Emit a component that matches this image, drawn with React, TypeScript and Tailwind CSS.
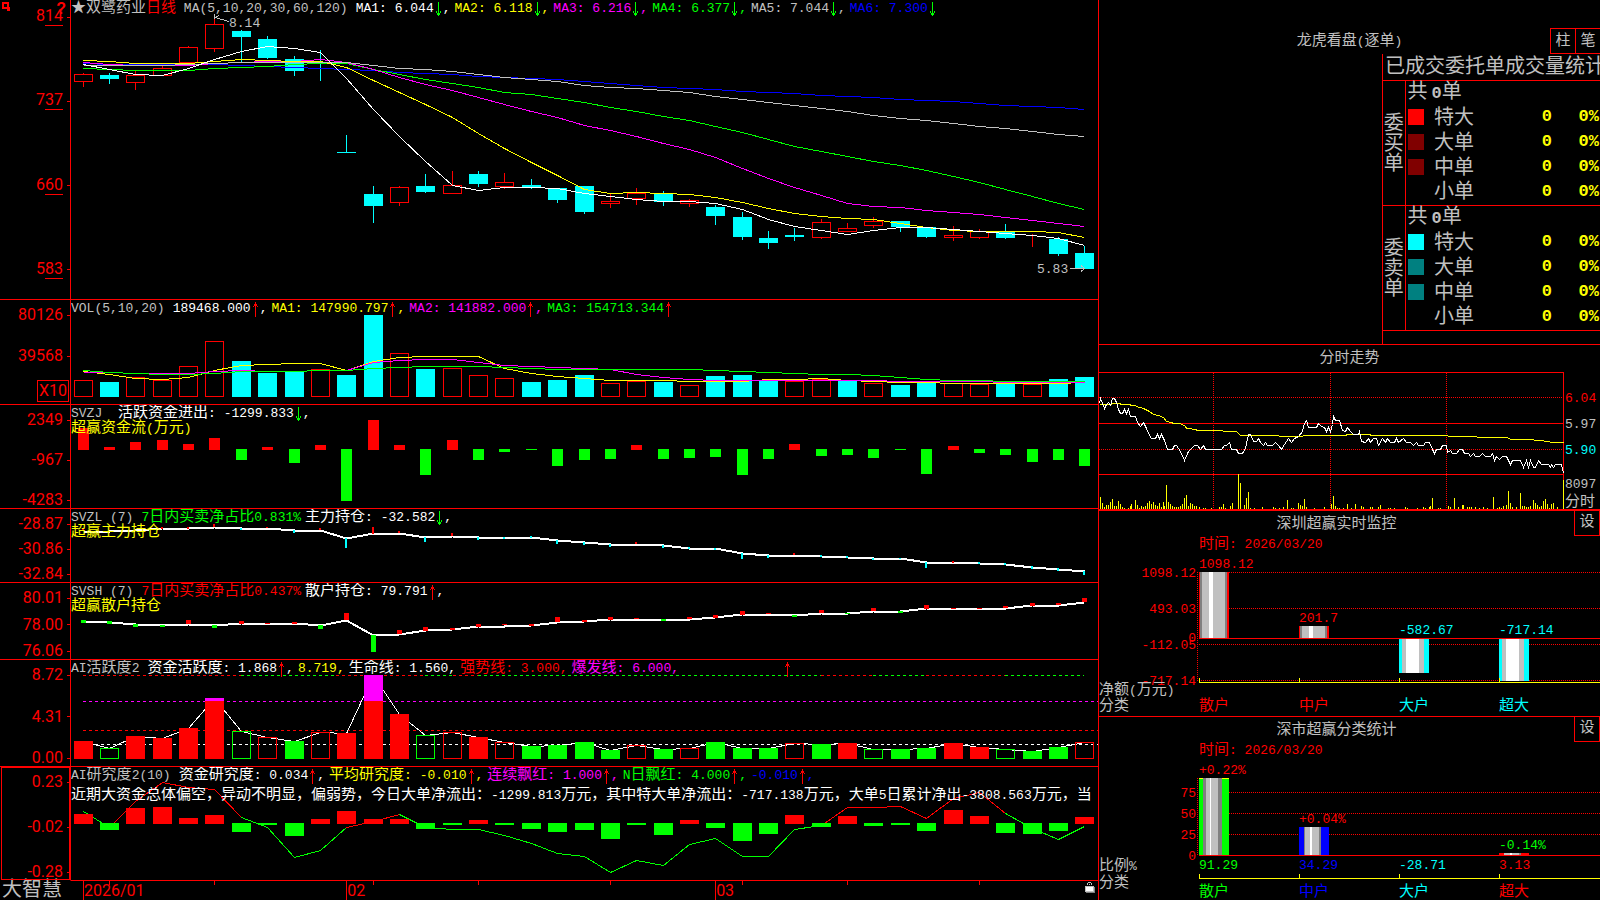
import { Fragment, type ReactNode } from "react";

/* ---------- palette ---------- */
const RED = "#ff0000";
const GREEN = "#00ff00";
const CYAN = "#00ffff";
const YELLOW = "#ffff00";
const MAGENTA = "#ff00ff";
const BLUE = "#0000ff";
const SILVER = "#c0c0c0";
const GREY = "#808080";
const WHITE = "#ffffff";

/* ---------- geometry shared by all daily charts ---------- */
const LEFT = 71;
const WIDTH = 1027;
const cx = (i: number) => Math.floor(83.18 + 26.36 * i);
const third = (base: number, v: number) => Math.round(base + v / 3);
const line = (base: number, values: number[], from = 0) =>
  values.map((v, i) => `${cx(i + from) + 0.5},${third(base, v) + 0.5}`).join(" ");

/* ---------- text ---------- */
const WIDE = /([\u2605\u3000-\u9fff\uff00-\uffef]+)/;

function Mixed({ text, className = "" }: { text: string; className?: string }) {
  return (
    <span className={`whitespace-pre ${className}`}>
      {text.split(WIDE).map((run, i) =>
        i % 2 ? (
          <span key={i} className="text-[15px] leading-4">
            {run}
          </span>
        ) : (
          <Fragment key={i}>{run}</Fragment>
        ),
      )}
    </span>
  );
}

function Arrow({ up = false }: { up?: boolean }) {
  return (
    <svg width="9" height="15" viewBox="0 0 9 15" className="shrink-0 self-center" shapeRendering="crispEdges" aria-hidden="true">
      {up ? (
        <path d="M4 0h1v15h-1zM3 2h3v2h-3zM2 4h1v1h-1zM6 4h1v1h-1z" fill={RED} />
      ) : (
        <path d="M4 0h1v14h-1zM3 11h3v2h-3zM2 9h1v2h-1zM6 9h1v2h-1z" fill={GREEN} />
      )}
    </svg>
  );
}

type Reading = { text: string; color: string; dir?: "up" | "down"; end?: boolean };

function Readings({ title, items }: { title: ReactNode; items: Reading[] }) {
  return (
    <header className="relative flex h-4 items-center gap-1 pt-0.5 whitespace-nowrap">
      <h2 className="mr-1 text-[#c0c0c0]">{title}</h2>
      {items.map((it, i) => (
        <span key={i} className={`flex items-center ${it.color}`}>
          <Mixed text={it.text} />
          {it.dir && <Arrow up={it.dir === "up"} />}
          {!it.end && it.dir && <Mixed text="," />}
        </span>
      ))}
    </header>
  );
}

/* ---------- panels ---------- */
function Tick({ children }: { children: ReactNode }) {
  return (
    <div className="flex items-center justify-end gap-1 font-['Roboto','Liberation_Sans',sans-serif] text-base leading-4 text-[#ff0000]">
      <span>{children}</span>
      <span className="h-px w-[3px] bg-[#ff0000]" />
    </div>
  );
}

function Panel({
  label,
  axis,
  axisClass = "justify-between pt-[7px]",
  y,
  height,
  chart,
  children,
  last = false,
}: {
  label: string;
  axis: ReactNode;
  axisClass?: string;
  y: number;
  height: number;
  chart: ReactNode;
  children: ReactNode;
  last?: boolean;
}) {
  return (
    <section aria-label={label} className={`flex min-h-0 ${last ? "" : "border-b border-[#ff0000]"}`}>
      <div className={`relative flex w-[70px] shrink-0 flex-col ${axisClass}`}>{axis}</div>
      <div className="relative min-w-0 flex-1 overflow-hidden border-l border-[#ff0000]">
        <svg
          className="absolute inset-0 h-full w-full"
          viewBox={`${LEFT} ${y} ${WIDTH} ${height}`}
          preserveAspectRatio="none"
          shapeRendering="crispEdges"
          fill="none"
        >
          {chart}
        </svg>
        {children}
      </div>
    </section>
  );
}

/* up flag, body top, body bottom, high, low */
const CANDLES: [number, number, number, number, number][] = [
  [1, 74, 81, 73, 87], [0, 75, 79, 73, 84], [1, 75, 82, 70, 90], [1, 68, 75, 66, 75], [1, 47, 62, 46, 62],
  [1, 24, 48, 17, 52], [0, 31, 37, 30, 62], [0, 39, 58, 36, 59], [0, 59, 71, 56, 76], [0, 68, 69, 50, 81],
  [0, 152, 153, 135, 153], [0, 194, 206, 186, 223], [1, 187, 202, 186, 206], [0, 186, 192, 174, 193], [1, 185, 193, 171, 193],
  [0, 174, 184, 171, 187], [1, 182, 186, 173, 189], [0, 185, 188, 179, 189], [0, 188, 200, 188, 203], [0, 186, 212, 186, 214],
  [1, 201, 203, 194, 208], [1, 193, 198, 188, 205], [0, 194, 202, 191, 206], [1, 200, 203, 199, 207], [0, 207, 216, 205, 225],
  [0, 217, 237, 212, 240], [0, 238, 243, 231, 249], [0, 235, 237, 228, 241], [1, 222, 237, 219, 239], [1, 228, 231, 223, 232],
  [1, 221, 225, 217, 228], [0, 221, 227, 221, 232], [0, 227, 237, 227, 238], [1, 235, 237, 226, 241], [1, 231, 237, 229, 239],
  [0, 232, 238, 224, 239], [1, 236, 236, 234, 247], [0, 239, 254, 237, 256], [0, 253, 269, 246, 269],
];

const MA: { color: string; v: number[] }[] = [
  { color: BLUE, v: [189, 191, 193, 192, 191, 193, 195, 197, 200, 203, 206, 211, 216, 220, 223, 227, 231, 234, 238, 244, 250, 254, 260, 263, 268, 272, 277, 280, 284, 289, 292, 296, 301, 304, 309, 314, 317, 322, 326] },
  { color: GREEN, v: [203, 207, 209, 211, 209, 204, 200, 197, 192, 188, 190, 207, 222, 236, 248, 262, 275, 283, 295, 305, 320, 334, 347, 361, 379, 397, 418, 437, 452, 467, 482, 496, 511, 529, 547, 568, 589, 608, 628] },
  { color: MAGENTA, v: [187, 191, 194, 195, 194, 189, 186, 184, 184, 176, 187, 208, 232, 251, 271, 292, 312, 332, 351, 375, 391, 409, 428, 448, 472, 505, 534, 562, 586, 610, 619, 622, 630, 636, 643, 652, 661, 670, 679] },
  { color: YELLOW, v: [179, 184, 188, 190, 190, 183, 178, 180, 182, 182, 202, 240, 276, 312, 352, 400, 445, 485, 525, 566, 580, 577, 580, 583, 592, 607, 625, 640, 649, 653, 658, 669, 681, 690, 694, 694, 694, 697, 712] },
  { color: SILVER, v: [196, 195, 195, 195, 192, 188, 187, 186, 185, 185, 187, 194, 203, 208, 214, 222, 230, 238, 244, 254, 260, 265, 270, 277, 288, 298, 306, 315, 324, 334, 344, 353, 361, 370, 378, 385, 393, 401, 409] },
  { color: WHITE, v: [192, 208, 221, 226, 205, 177, 152, 139, 143, 155, 233, 327, 407, 482, 554, 571, 560, 560, 565, 578, 589, 596, 604, 604, 608, 628, 657, 678, 691, 701, 690, 681, 681, 688, 692, 700, 706, 715, 736] },
];

function PriceChart() {
  return (
    <>
      {CANDLES.map(([up, top, bottom, high, low], i) => {
        const x = cx(i);
        return up ? (
          <g key={i} stroke={RED}>
            <path d={`M${x + 0.5} ${high}V${top}M${x + 0.5} ${bottom}V${low}`} />
            <rect x={x - 8.5} y={top + 0.5} width="18" height={bottom - top} />
          </g>
        ) : (
          <g key={i} fill={CYAN}>
            <rect x={x} y={high} width="1" height={low - high} />
            <rect x={x - 9} y={top} width="19" height={bottom - top} />
          </g>
        );
      })}
      {MA.map((m) => (
        <polyline key={m.color} points={line(0, m.v)} stroke={m.color} />
      ))}
      <g stroke={SILVER}>
        <path d="M214.500 14V19M215 17.500L229 21.500M215 17.500L219 15.500" />
        <path d="M1070 268.500H1084M1081 265.500L1084.500 268.500L1081 271.500" />
      </g>
      <g fill={SILVER} fontSize="13">
        <text x="229" y="27">8.14</text>
        <text x="1037" y="273">5.83</text>
      </g>
    </>
  );
}

const VOL_TOP = [271, 276, 262, 271, 229, 154, 213, 249, 245, 238, 255, 75, 190, 237, 235, 256, 265, 276, 270, 255, 280, 274, 276, 286, 258, 255, 271, 274, 267, 271, 280, 285, 279, 280, 283, 280, 283, 267, 261];
const VOL_UP = "101111000100101110001101000110100110100";
const VOL_MA = [
  { color: YELLOW, v: [243, 253, 264, 268, 262, 240, 226, 222, 220, 220, 240, 212, 202, 199, 199, 199, 233, 250, 259, 265, 271, 271, 271, 274, 274, 274, 268, 268, 265, 269, 274, 276, 277, 280, 280, 280, 280, 280, 277] },
  { color: MAGENTA, v: [247, 247, 249, 250, 250, 242, 241, 243, 244, 241, 241, 217, 210, 208, 208, 216, 226, 228, 231, 233, 237, 252, 261, 267, 271, 271, 271, 271, 271, 271, 271, 273, 274, 274, 274, 276, 277, 277, 277] },
  { color: GREEN, v: [241, 247, 249, 253, 252, 248, 244, 244, 244, 241, 241, 234, 230, 229, 229, 229, 231, 234, 236, 238, 238, 238, 238, 238, 240, 244, 247, 250, 251, 253, 255, 260, 266, 271, 271, 272, 274, 274, 274] },
];

function VolumeChart() {
  return (
    <>
      {VOL_TOP.map((v, i) => {
        const top = third(290, v);
        return VOL_UP[i] === "1" ? (
          <rect key={i} x={cx(i) - 8.5} y={top + 0.5} width="18" height={396 - top} stroke={RED} />
        ) : (
          <rect key={i} x={cx(i) - 9} y={top} width="19" height={397 - top} fill={CYAN} />
        );
      })}
      {VOL_MA.map((m) => (
        <polyline key={m.color} points={line(290, m.v)} stroke={m.color} />
      ))}
    </>
  );
}

/* Bars that grow up (red) or down (green) from a zero line */
function ZeroBars({ ends, base, zero, half }: { ends: number[]; base: number; zero: number; half: number }) {
  return (
    <>
      {ends.map((e, i) => {
        const y = third(base, e);
        const up = y < zero;
        return (
          <rect key={i} x={cx(i) - half} width={half * 2 + 1} y={up ? y : zero} height={up ? zero + 1 - y : Math.max(1, y - zero)} fill={up ? RED : GREEN} />
        );
      })}
    </>
  );
}

const FLOW = [414, 471, 456, 450, 462, 444, 510, 471, 519, 465, 633, 390, 465, 555, 450, 510, 486, 480, 528, 510, 507, 465, 507, 504, 501, 555, 507, 462, 498, 495, 504, 480, 552, 468, 489, 495, 516, 510, 528];

const MAIN_HOLD = [722, 722, 720, 714, 714, 710, 713, 714, 720, 720, 744, 730, 729, 741, 737, 741, 741, 741, 750, 757, 762, 762, 766, 773, 774, 790, 795, 795, 798, 801, 804, 804, 816, 816, 818, 822, 830, 836, 843];
const MAIN_MARK: [number, string, number, number][] = [
  [0, RED, 716, 724], [3, RED, 711, 717], [4, RED, 711, 717], [5, RED, 702, 711], [6, CYAN, 713, 719], [7, RED, 710, 714],
  [8, CYAN, 720, 729], [9, RED, 714, 720], [10, CYAN, 744, 774], [11, RED, 711, 732], [12, RED, 724, 729], [13, CYAN, 741, 756],
  [14, RED, 729, 738], [15, CYAN, 741, 750], [16, CYAN, 741, 747], [17, CYAN, 738, 743], [18, CYAN, 750, 762], [19, CYAN, 756, 765],
  [20, CYAN, 762, 771], [21, RED, 756, 762], [22, CYAN, 765, 774], [23, CYAN, 770, 777], [24, CYAN, 773, 780], [25, CYAN, 790, 807],
  [26, CYAN, 795, 804], [27, RED, 789, 795], [28, CYAN, 795, 801], [29, CYAN, 798, 804], [30, CYAN, 804, 810], [31, CYAN, 804, 808],
  [32, CYAN, 816, 834], [33, RED, 813, 819], [34, CYAN, 816, 822], [35, CYAN, 819, 825], [36, CYAN, 828, 837], [37, CYAN, 834, 843],
  [38, CYAN, 843, 855],
];

const RETAIL_HOLD = [122, 125, 133, 134, 131, 135, 130, 129, 129, 135, 119, 165, 161, 150, 148, 139, 137, 134, 126, 123, 118, 117, 117, 116, 112, 103, 101, 105, 98, 99, 93, 93, 85, 84, 84, 83, 76, 74, 65];
const RETAIL_MARK: [number, string, number, number][] = [
  [0, GREEN, 120, 129], [1, GREEN, 123, 132], [2, GREEN, 132, 141], [3, GREEN, 135, 141], [4, RED, 120, 132], [5, GREEN, 135, 144],
  [6, RED, 123, 132], [7, RED, 128, 132], [8, RED, 125, 131], [9, GREEN, 135, 147], [10, RED, 99, 119], [11, GREEN, 165, 216],
  [12, RED, 150, 162], [13, RED, 141, 153], [14, RED, 143, 149], [15, RED, 132, 141], [16, RED, 131, 136], [17, RED, 131, 137],
  [18, RED, 111, 125], [19, RED, 119, 126], [20, RED, 111, 120], [21, RED, 113, 117], [22, GREEN, 116, 123], [23, RED, 111, 117],
  [24, RED, 105, 114], [25, RED, 93, 105], [26, RED, 99, 102], [27, GREEN, 104, 111], [28, RED, 90, 99], [29, GREEN, 98, 102],
  [30, RED, 84, 93], [31, GREEN, 93, 99], [32, RED, 75, 87], [33, RED, 83, 87], [34, RED, 83, 87], [35, RED, 78, 84],
  [36, RED, 69, 77], [37, RED, 69, 75], [38, RED, 54, 66],
];

function HoldChart({ base, values, marks, width }: { base: number; values: number[]; marks: [number, string, number, number][]; width: number }) {
  return (
    <>
      <polyline points={line(base, values)} stroke={WHITE} strokeWidth="2" />
      {marks.map(([i, color, a, b]) => (
        <rect key={i} x={cx(i) - Math.floor(width / 2)} y={third(base, a)} width={width} height={Math.max(1, third(base, b) - third(base, a))} fill={color} />
      ))}
    </>
  );
}

const ACTIVE_TOP = [483, 505, 468, 474, 444, 354, 454, 472, 483, 457, 459, 285, 402, 466, 457, 471, 487, 498, 495, 486, 510, 496, 507, 505, 486, 504, 504, 490, 492, 489, 506, 507, 504, 489, 501, 508, 513, 501, 485];
/* R/G filled, r/g outlined */
const ACTIVE_KIND = "RgRRRRgrGrRRRgrRrGGGGrGrGGGrGRgGGRRgGGr";
const CAP: [number, number, string][] = [
  [83, 241, RED], [241, 336, GREEN], [336, 425, RED], [425, 453, GREEN], [453, 478, RED], [478, 821, GREEN],
  [821, 873, RED], [873, 926, GREEN], [926, 1005, RED], [1005, 1084, GREEN],
];

function ActivityChart() {
  return (
    <>
      {CAP.map(([a, b, color]) => (
        <path key={a} d={`M${a} 675.500H${b}`} stroke={color} strokeDasharray="3 3" />
      ))}
      <path d="M83 701.500H1098" stroke={MAGENTA} strokeDasharray="3 3" />
      <path d="M83 730.500H1098" stroke={RED} strokeDasharray="3 3" />
      <path d="M83 744.500H1098" stroke={WHITE} strokeDasharray="3 3" />
      <polyline points={line(580, ACTIVE_TOP)} stroke={WHITE} />
      {ACTIVE_TOP.map((v, i) => {
        const top = third(580, v);
        const kind = ACTIVE_KIND[i];
        const color = kind.toUpperCase() === "R" ? RED : GREEN;
        return kind === kind.toUpperCase() ? (
          <rect key={i} x={cx(i) - 9} y={top} width="19" height={759 - top} fill={color} />
        ) : (
          <rect key={i} x={cx(i) - 8.5} y={top + 0.5} width="18" height={758 - top} stroke={color} />
        );
      })}
      <rect x={cx(5) - 9} y="698" width="19" height="3" fill={MAGENTA} />
      <rect x={cx(11) - 9} y="675" width="19" height="26" fill={MAGENTA} />
    </>
  );
}

const STUDY = [702, 750, 684, 681, 714, 705, 756, 735, 768, 717, 693, 717, 717, 747, 735, 720, 735, 747, 756, 750, 777, 735, 765, 720, 744, 783, 762, 705, 741, 708, 738, 735, 753, 690, 708, 759, 762, 753, 711];
const STUDY_LINE = [694, 740, 662, 607, 622, 626, 711, 742, 832, 811, 742, 723, 703, 740, 747, 747, 764, 790, 820, 829, 877, 841, 856, 793, 775, 829, 829, 748, 736, 682, 682, 679, 715, 655, 635, 699, 743, 778, 738];
const STUDY_SPAN: [number, number, string][] = [
  [0, 1, GREEN], [1, 6, RED], [6, 10, GREEN], [10, 12, RED], [12, 28, GREEN], [28, 35, RED], [35, 38, GREEN],
];

function StudyChart() {
  return (
    <>
      {STUDY_SPAN.map(([a, b, color]) => (
        <polyline key={a} points={line(580, STUDY_LINE.slice(a, b + 1), a)} stroke={color} />
      ))}
      <ZeroBars ends={STUDY} base={580} zero={823} half={9} />
    </>
  );
}

/* ---------- right column ---------- */
function OrderTable() {
  const groups = [
    { side: "委买单", rows: [["特大", "bg-[#ff0000]"], ["大单", "bg-[#800000]"], ["中单", "bg-[#800000]"], ["小单", "bg-black"]] },
    { side: "委卖单", rows: [["特大", "bg-[#00ffff]"], ["大单", "bg-[#008080]"], ["中单", "bg-[#008080]"], ["小单", "bg-black"]] },
  ];
  return (
    <>
      <h3 id="orders" className="h-[26px] pt-0.5 pl-0.5 text-xl leading-6 whitespace-nowrap text-[#c0c0c0]">
        已成交委托单成交量统计
      </h3>
      <table aria-labelledby="orders" className="w-full table-fixed border-collapse text-xl leading-5 text-[#c0c0c0]">
        <colgroup>
          <col className="w-[22px]" />
          <col className="w-[27px]" />
          <col className="w-[56px]" />
          <col className="w-[64px]" />
          <col />
        </colgroup>
        {groups.map((g) => (
          <tbody key={g.side} className="border-y border-[#ff0000]">
            <tr className="h-[25px]">
              <th rowSpan={5} scope="rowgroup" className="border-r border-[#ff0000] p-0 pt-1 font-normal">
                <span className="mx-auto block w-5 break-all">{g.side}</span>
              </th>
              <td colSpan={4} className="p-0 pt-px pl-0.5">
                共<span className="ml-1 text-[17px] font-bold">0</span>单
              </td>
            </tr>
            {g.rows.map(([name, swatch]) => (
              <tr key={name} className="h-[25px]">
                <td className="p-0 pb-0.5 pl-0.5">
                  <span className={`block size-4 ${swatch}`} />
                </td>
                <th scope="row" className="p-0 pt-px pl-0.5 text-left font-normal">{name}</th>
                <td className="p-0 pb-0.5 text-right text-[17px] font-bold text-[#ffff00]">0</td>
                <td className="p-0 pr-px pb-0.5 text-right text-[17px] font-bold text-[#ffff00]">0%</td>
              </tr>
            ))}
          </tbody>
        ))}
      </table>
    </>
  );
}

const PRICE_PATH =
  "28,205 31,190 36,205 42,220 48,208 54,202 62,210 67,190 73,190 79,202 85,222 91,235 97,235 103,223 109,235 115,223 121,243 135,243 142,262 150,275 160,262 168,280 175,295 184,310 196,310 202,298 208,310 214,298 222,315 232,343 246,343 252,331 260,331 270,350 283,375 295,350 302,343 312,331 322,331 330,343 340,331 347,343 395,343 402,331 410,331 418,322 424,343 438,343 446,355 457,355 465,340 475,297 480,298 490,320 498,320 505,310 512,322 520,331 526,322 532,331 548,331 556,322 566,331 574,343 584,328 594,310 604,322 614,310 626,305 636,290 643,265 650,257 655,276 678,276 686,265 694,275 702,276 708,289 714,276 722,289 726,268 730,244 735,256 748,256 756,286 766,289 772,277 780,289 790,297 804,298 809,289 815,320 827,322 834,311 841,322 851,311 858,310 866,331 878,311 886,322 892,311 900,322 912,322 918,311 926,322 940,311 948,322 962,322 970,331 978,322 986,331 1000,331 1006,322 1018,322 1026,343 1034,355 1040,343 1050,343 1058,331 1069,331 1073,352 1080,345 1086,355 1100,355 1108,343 1116,343 1122,355 1134,355 1142,364 1150,355 1156,364 1168,364 1176,355 1186,364 1202,364 1206,355 1212,376 1220,364 1228,374 1238,364 1250,364 1262,388 1268,376 1292,376 1300,397 1308,376 1316,397 1322,376 1330,397 1336,397 1344,376 1354,388 1374,388 1380,397 1385,388 1390,397 1396,388 1415,388 1420,415";
const AVG_PATH =
  "28,208 60,208 66,205 90,205 92,208 120,208 122,211 135,211 140,215 160,220 178,228 190,238 205,240 220,247 230,260 245,262 250,265 272,266 285,273 290,280 318,284 320,287 398,287 400,290 440,290 450,301 566,301 568,304 638,304 640,301 768,301 770,298 840,298 842,301 1073,301 1075,304 1160,304 1162,307 1248,308 1265,313 1310,314 1350,317 1390,321 1420,323";
const TICK_VOL =
  "31,486 37,504 43,516 49,510 55,510 61,501 67,492 73,513 79,513 85,498 91,507 97,516 103,519 115,519 121,513 124,507 136,495 142,510 148,519 154,513 160,516 166,513 172,504 178,498 184,507 190,501 196,510 202,513 208,504 214,516 220,501 223,513 229,450 235,501 241,507 247,513 253,516 259,516 265,516 271,513 277,507 283,489 289,480 295,513 301,504 307,507 313,513 319,513 328,516 340,519 346,519 364,519 388,516 394,516 400,507 406,519 421,513 427,504 445,417 451,444 463,510 469,489 475,471 481,519 493,519 517,516 550,516 556,519 568,519 580,516 592,495 604,519 610,519 625,504 631,510 637,513 643,492 649,516 673,519 703,516 724,507 730,483 736,513 742,519 748,519 760,519 772,507 784,519 796,507 814,513 820,516 841,516 847,516 865,516 871,510 895,519 901,519 913,519 946,516 952,519 982,519 1000,516 1006,519 1018,516 1021,513 1027,489 1045,519 1051,519 1075,513 1081,516 1093,489 1105,516 1117,510 1120,510 1132,516 1138,516 1144,516 1156,516 1168,519 1180,516 1192,519 1210,486 1222,519 1228,516 1234,519 1240,513 1249,510 1255,468 1261,504 1267,516 1279,516 1291,474 1297,513 1303,513 1309,516 1315,516 1320,513 1330,495 1336,504 1342,510 1348,516 1354,513 1360,498 1366,492 1372,507 1378,519 1384,507 1390,504 1402,516 1420,435";
const toPoints = (s: string) =>
  s.split(" ").map((p) => {
    const [x, y] = p.split(",").map(Number);
    return [Math.floor(1090 + x / 3), Math.floor(335 + y / 3)];
  });
const toLine = (s: string) => toPoints(s).map(([x, y]) => `${x + 0.5},${y + 0.5}`).join(" ");

function IntradayChart() {
  return (
    <svg className="min-h-0 w-full flex-1" viewBox="1099 372 501 137" shapeRendering="crispEdges" fill="none">
      <g stroke={RED}>
        <path d="M1099 372.500H1563.500V509M1099 423.500H1563M1099 474.500H1563" />
        <path d="M1099 397.500H1563M1099 449.500H1563M1213.500 373V509M1330.500 373V509M1446.500 373V509" strokeDasharray="1 1" />
      </g>
      <polyline points={toLine(AVG_PATH)} stroke={YELLOW} />
      <polyline points={toLine(PRICE_PATH)} stroke={WHITE} />
      {toPoints(TICK_VOL).map(([x, y], i) => (
        <rect key={i} x={x} y={y} width="1" height={509 - y} fill={YELLOW} />
      ))}
      <g fontSize="13">
        <text x="1565" y="402" fill={RED}>6.04</text>
        <text x="1565" y="428" fill={SILVER}>5.97</text>
        <text x="1565" y="454" fill={CYAN}>5.90</text>
        <text x="1565" y="488" fill={SILVER}>8097</text>
        <text x="1565" y="506" fill={SILVER} fontSize="15">分时</text>
      </g>
    </svg>
  );
}

/* width and colour of each vertical stripe of a shaded bar */
type Stripe = [number, string];
function ShadedBar({ x, y, height, stripes }: { x: number; y: number; height: number; stripes: Stripe[] }) {
  let at = x;
  return (
    <>
      {stripes.map(([w, color], i) => {
        const left = at;
        at += w;
        return <rect key={i} x={left} y={y} width={w} height={height} fill={color} />;
      })}
    </>
  );
}

const RED_BAR: Stripe[] = [[1, RED], [2, GREY], [7, SILVER], [4, WHITE], [12, SILVER], [2, GREY], [2, RED]];
const CYAN_BAR: Stripe[] = [[3, CYAN], [4, SILVER], [13, WHITE], [5, SILVER], [5, CYAN]];

function NetChart() {
  return (
    <svg className="min-h-0 w-full flex-1" viewBox="1099 536 501 180" shapeRendering="crispEdges" fill="none">
      <path d="M1197.500 572V681M1199 572.500H1600M1199 608.500H1600M1199 644.500H1600M1199 680.500H1600" stroke={RED} strokeDasharray="1 1" />
      <path d="M1199 638.500H1600" stroke={RED} />
      <ShadedBar x={1199} y={572} height={66} stripes={RED_BAR} />
      <ShadedBar x={1299} y={626} height={12} stripes={RED_BAR} />
      <ShadedBar x={1399} y={639} height={34} stripes={CYAN_BAR} />
      <ShadedBar x={1499} y={639} height={42} stripes={CYAN_BAR} />
      <path d="M1199.500 678V682.500H1600M1299.500 678V682M1399.500 678V682M1499.500 678V682" stroke={YELLOW} />
      <g fontSize="13" fill={RED}>
        <text x="1199" y="548"><tspan fontSize="15">时间</tspan>: 2026/03/20</text>
        <text x="1199" y="568">1098.12</text>
        <text x="1299" y="622">201.7</text>
        <g fill={CYAN}>
          <text x="1399" y="634">-582.67</text>
          <text x="1499" y="634">-717.14</text>
        </g>
        <g textAnchor="end">
          <text x="1196" y="577">1098.12</text>
          <text x="1196" y="613">493.03</text>
          <text x="1196" y="642">0</text>
          <text x="1196" y="649">-112.05</text>
          <text x="1196" y="685">-717.14</text>
        </g>
      </g>
      <g fontSize="15">
        <g fill={SILVER}>
          <text x="1099" y="694">净额<tspan fontSize="13">(</tspan>万元<tspan fontSize="13">)</tspan></text>
          <text x="1099" y="710">分类</text>
        </g>
        <text x="1199" y="710" fill={RED}>散户</text>
        <text x="1299" y="710" fill={RED}>中户</text>
        <text x="1399" y="710" fill={CYAN}>大户</text>
        <text x="1499" y="710" fill={CYAN}>超大</text>
      </g>
    </svg>
  );
}

function RatioChart() {
  return (
    <svg className="min-h-0 w-full flex-1" viewBox="1099 742 501 158" shapeRendering="crispEdges" fill="none">
      <path d="M1197.500 778V856M1199 792.500H1600M1199 813.500H1600M1199 834.500H1600" stroke={RED} strokeDasharray="1 1" />
      <ShadedBar x={1199} y={778} height={77} stripes={[[4, GREEN], [3, GREY], [4, SILVER], [1, WHITE], [7, SILVER], [4, GREY], [7, GREEN]]} />
      <path d="M1199 778.500H1203M1222 778.500H1229" stroke={YELLOW} />
      <ShadedBar x={1299} y={827} height={28} stripes={[[5, BLUE], [1, GREY], [5, SILVER], [2, WHITE], [7, SILVER], [2, GREY], [8, BLUE]]} />
      <ShadedBar x={1499} y={853} height={2} stripes={[[5, RED], [6, SILVER], [2, WHITE], [7, SILVER], [2, GREY], [8, RED]]} />
      <path d="M1199 855.500H1600" stroke={RED} />
      <path d="M1199.500 874V878.500H1600M1299.500 874V878M1399.500 874V878M1499.500 874V878" stroke={YELLOW} />
      <g fontSize="13" fill={RED}>
        <text x="1199" y="754"><tspan fontSize="15">时间</tspan>: 2026/03/20</text>
        <text x="1199" y="774">+0.22%</text>
        <text x="1299" y="823">+0.04%</text>
        <text x="1499" y="849" fill={GREEN}>-0.14%</text>
        <text x="1199" y="869" fill={GREEN}>91.29</text>
        <text x="1299" y="869" fill={BLUE}>34.29</text>
        <text x="1399" y="869" fill={CYAN}>-28.71</text>
        <text x="1499" y="869">3.13</text>
        <g textAnchor="end">
          <text x="1196" y="797">75</text>
          <text x="1196" y="818">50</text>
          <text x="1196" y="839">25</text>
          <text x="1196" y="860">0</text>
        </g>
      </g>
      <g fontSize="15">
        <g fill={SILVER}>
          <text x="1099" y="870">比例<tspan fontSize="13">%</tspan></text>
          <text x="1099" y="887">分类</text>
        </g>
        <text x="1199" y="896" fill={GREEN}>散户</text>
        <text x="1299" y="896" fill={BLUE}>中户</text>
        <text x="1399" y="896" fill={CYAN}>大户</text>
        <text x="1499" y="896" fill={RED}>超大</text>
      </g>
    </svg>
  );
}

function CardTitle({ children }: { children: string }) {
  return (
    <div className="flex h-[25px] shrink-0">
      <h2 className="flex-1 pt-1.5 text-center text-[15px] leading-4 text-[#c0c0c0]">{children}</h2>
      <button type="button" className="w-[26px] border-r border-b border-l border-[#ff0000] pb-px text-[15px] leading-4 text-[#c0c0c0]">
        设
      </button>
    </div>
  );
}

/* ---------- page ---------- */
export default function App() {
  return (
    <main className="flex h-screen min-h-[720px] overflow-hidden bg-black font-['Liberation_Mono','Noto_Sans_CJK_SC',monospace] text-[13px] leading-4 text-white">
      <div className="grid min-w-0 flex-1 grid-rows-[minmax(0,300fr)_minmax(0,105fr)_minmax(0,104fr)_minmax(0,74fr)_minmax(0,77fr)_minmax(0,107fr)_minmax(0,113fr)_20px]">
        <Panel
          label="日线"
          y={0}
          height={299}
          axisClass="justify-between pt-2 pb-5"
          axis={
            <>
              <svg className="absolute top-0.5 left-0.5" width="8" height="9" viewBox="0 0 8 9" shapeRendering="crispEdges" aria-hidden="true">
                <path d="M1 1H6V6H1ZM6 6H8V8H6Z" stroke={RED} strokeWidth="2" fill="none" />
              </svg>
              <span className="absolute top-px right-1 font-['Liberation_Sans',sans-serif] text-base leading-4 font-bold text-[#ff0000]">?</span>
              {["8.14", "7.37", "6.60", "5.83"].map((p) => (
                <Tick key={p}>
                  {p[0]}
                  <span className="inline-block h-[18px] border-b border-[#ff0000] leading-4">{p.slice(2)}</span>
                </Tick>
              ))}
            </>
          }
          chart={<PriceChart />}
        >
          <Readings
            title={
              <>
                <Mixed text="★双鹭药业" />
                <Mixed text="日线" className="text-[#ff0000]" />
                <Mixed text=" MA(5,10,20,30,60,120)" />
              </>
            }
            items={[
              { text: "MA1: 6.044", color: "text-white", dir: "down" },
              { text: "MA2: 6.118", color: "text-[#ffff00]", dir: "down" },
              { text: "MA3: 6.216", color: "text-[#ff00ff]", dir: "down" },
              { text: "MA4: 6.377", color: "text-[#00ff00]", dir: "down" },
              { text: "MA5: 7.044", color: "text-[#c0c0c0]", dir: "down" },
              { text: "MA6: 7.300", color: "text-[#0000ff]", dir: "down", end: true },
            ]}
          />
        </Panel>

        <Panel
          label="成交量"
          y={300}
          height={104}
          axisClass="justify-between pt-[7px] pb-0.5"
          axis={
            <>
              <div className="flex flex-col gap-[25px]">
                <Tick>80126</Tick>
                <Tick>39568</Tick>
              </div>
              <span className="mr-px ml-auto flex h-[22px] items-center border border-[#ff0000] px-px font-['Roboto','Liberation_Sans',sans-serif] text-base text-[#ff0000]">
                X10
              </span>
            </>
          }
          chart={<VolumeChart />}
        >
          <Readings
            title="VOL(5,10,20)"
            items={[
              { text: "189468.000", color: "text-white", dir: "up" },
              { text: "MA1: 147990.797", color: "text-[#ffff00]", dir: "up" },
              { text: "MA2: 141882.000", color: "text-[#ff00ff]", dir: "up" },
              { text: "MA3: 154713.344", color: "text-[#00ff00]", dir: "up", end: true },
            ]}
          />
        </Panel>

        <Panel
          label="资金流"
          y={405}
          height={103}
          axis={
            <>
              <Tick>2349</Tick>
              <Tick>-967</Tick>
              <Tick>-4283</Tick>
            </>
          }
          chart={<ZeroBars ends={FLOW} base={290} zero={449} half={5} />}
        >
          <Readings title={<Mixed text="SVZJ " />} items={[{ text: "活跃资金进出: -1299.833", color: "text-white", dir: "down" }]} />
          <p className="relative leading-4 text-[#ffff00]">
            <Mixed text="超赢资金流(万元)" />
          </p>
        </Panel>

        <Panel
          label="主力持仓"
          y={509}
          height={73}
          axis={
            <>
              <Tick>-28.87</Tick>
              <Tick>-30.86</Tick>
              <Tick>-32.84</Tick>
            </>
          }
          chart={<HoldChart base={290} values={MAIN_HOLD} marks={MAIN_MARK} width={2} />}
        >
          <Readings
            title="SVZL (7)"
            items={[
              { text: "7日内买卖净占比0.831%", color: "text-[#00ff00]" },
              { text: "主力持仓: -32.582", color: "text-white", dir: "down" },
            ]}
          />
          <p className="relative leading-4 text-[#ffff00]">
            <Mixed text="超赢主力持仓" />
          </p>
        </Panel>

        <Panel
          label="散户持仓"
          y={583}
          height={76}
          axis={
            <>
              <Tick>80.01</Tick>
              <Tick>78.00</Tick>
              <Tick>76.06</Tick>
            </>
          }
          chart={<HoldChart base={580} values={RETAIL_HOLD} marks={RETAIL_MARK} width={5} />}
        >
          <Readings
            title="SVSH (7)"
            items={[
              { text: "7日内买卖净占比0.437%", color: "text-[#ff0000]" },
              { text: "散户持仓: 79.791", color: "text-white", dir: "up" },
            ]}
          />
          <p className="relative leading-4 text-[#ffff00]">
            <Mixed text="超赢散户持仓" />
          </p>
        </Panel>

        <Panel
          label="活跃度"
          y={660}
          height={106}
          axis={
            <>
              <Tick>8.72</Tick>
              <Tick>4.31</Tick>
              <Tick>0.00</Tick>
            </>
          }
          chart={<ActivityChart />}
        >
          <Readings
            title={<Mixed text="AI活跃度2" />}
            items={[
              { text: "资金活跃度: 1.868", color: "text-white", dir: "up" },
              { text: "8.719,", color: "text-[#ffff00]" },
              { text: "生命线: 1.560,", color: "text-white" },
              { text: "强势线: 3.000,", color: "text-[#ff0000]" },
              { text: "爆发线: 6.000,", color: "text-[#ff00ff]" },
              { text: "", color: "text-white ml-25", dir: "up", end: true },
            ]}
          />
        </Panel>

        <Panel
          label="研究度"
          y={767}
          height={113}
          last
          axisClass="justify-between pt-[7px] before:absolute before:inset-y-0 before:right-0 before:left-px before:border before:border-[#ff0000]"
          axis={
            <>
              <Tick>0.23</Tick>
              <Tick>-0.02</Tick>
              <Tick>-0.28</Tick>
            </>
          }
          chart={<StudyChart />}
        >
          <Readings
            title={<Mixed text="AI研究度2(10)" />}
            items={[
              { text: "资金研究度: 0.034", color: "text-white", dir: "up" },
              { text: "平均研究度: -0.010", color: "text-[#ffff00]", dir: "up" },
              { text: "连续飘红: 1.000", color: "text-[#ff00ff]", dir: "up" },
              { text: "N日飘红: 4.000", color: "text-[#00ff00]", dir: "up" },
              { text: "-0.010", color: "text-[#0000ff]", dir: "up" },
            ]}
          />
          <p className="relative mt-1 overflow-hidden pt-px leading-4">
            <Mixed text="近期大资金总体偏空，异动不明显，偏弱势，今日大单净流出：-1299.813万元，其中特大单净流出：-717.138万元，大单5日累计净出-3808.563万元，当" />
          </p>
        </Panel>

        <footer className="flex">
          <span className="w-[70px] shrink-0 pt-px pl-0.5 text-xl leading-5 text-[#c0c0c0]">大智慧</span>
          <div className="relative flex min-w-0 flex-1 border-t border-l border-t-[#ff0000] border-l-black pl-3 font-['Roboto','Liberation_Sans',sans-serif] text-base leading-5 text-[#ff0000]">
            <svg className="absolute inset-0 h-full w-full" viewBox="71 881 1027 19" preserveAspectRatio="none" shapeRendering="crispEdges" aria-hidden="true">
              <path d="M109.500 881V885M214.500 881V885M373.500 881V885M478.500 881V885M610.500 881V885M742.500 881V885M847.500 881V885M979.500 881V885" stroke={RED} />
            </svg>
            <span className="flex-[263] border-l border-[#ff0000]">2026/01</span>
            <span className="flex-[369] border-l border-[#ff0000]">02</span>
            <span className="flex flex-[383] justify-between border-l border-[#ff0000]">
              03
              <svg className="mt-px mr-0.5" width="11" height="12" viewBox="0 0 11 12" shapeRendering="crispEdges" aria-hidden="true">
                <path d="M3 0H6V1H3ZM2 1H3V3H2ZM6 1H7V3H6Z" fill={SILVER} />
                <path d="M4 2H5V3H4ZM0 4H9V10H0Z" fill={SILVER} />
                <path d="M1 5H8V9H1Z" fill={WHITE} />
                <path d="M9 5H10V11H1V10H9Z" fill={GREY} />
              </svg>
            </span>
          </div>
        </footer>
      </div>

      <aside className="grid w-[502px] shrink-0 grid-cols-[minmax(0,1fr)] grid-rows-[minmax(0,345fr)_minmax(0,166fr)_minmax(0,206fr)_minmax(0,183fr)] border-l border-[#ff0000]">
        <section className="flex min-h-0 flex-col overflow-hidden border-b border-[#ff0000] pt-7">
          <div className="grid h-[26px] shrink-0 grid-cols-[1fr_auto_1fr] items-center">
            <h2 className="col-start-2 pt-0.5 text-[#c0c0c0]">
              <Mixed text="龙虎看盘(逐单)" />
            </h2>
            <div className="flex h-full justify-end text-[15px] text-[#c0c0c0]">
              <button type="button" className="w-[25px] border-y border-l border-[#ff0000] pt-0.5">柱</button>
              <button type="button" className="w-[25px] border-y border-l border-[#ff0000] pt-0.5">笔</button>
            </div>
          </div>
          <div className="flex min-h-0 flex-1 justify-end">
            <div className="w-[218px] overflow-hidden border-l border-[#ff0000]">
              <OrderTable />
            </div>
          </div>
        </section>

        <section className="flex min-h-0 flex-col border-b-2 border-[#ff0000]">
          <h2 className="h-[27px] shrink-0 pt-1.5 text-center text-[15px] leading-4 text-[#c0c0c0]">分时走势</h2>
          <IntradayChart />
        </section>

        <section className="flex min-h-0 flex-col border-b border-[#ff0000]">
          <CardTitle>深圳超赢实时监控</CardTitle>
          <NetChart />
        </section>

        <section className="flex min-h-0 flex-col">
          <CardTitle>深市超赢分类统计</CardTitle>
          <RatioChart />
        </section>
      </aside>
    </main>
  );
}
